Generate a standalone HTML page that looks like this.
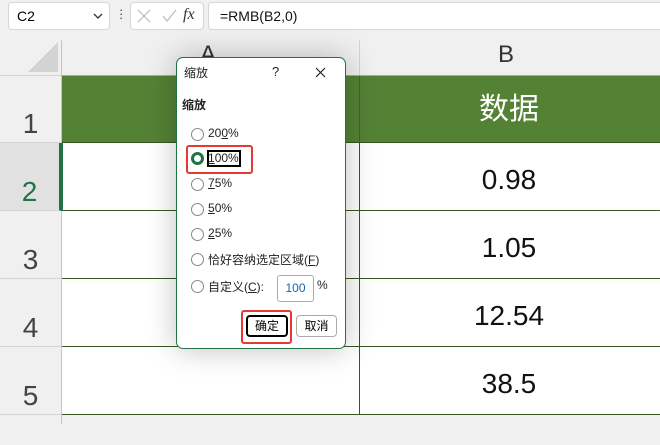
<!DOCTYPE html>
<html><head><meta charset="utf-8"><style>
body{margin:0;width:660px;height:424px;overflow:hidden;background:#f0f0f0;font-family:"Liberation Sans","Noto Sans CJK SC",sans-serif;position:relative}
.a{position:absolute}
.box{background:#fff;border:1px solid #d6d6d6;border-radius:4px}
.rh{position:absolute;left:0;width:61px;background:#f0f0f0;border-bottom:1px solid #d4d4d4;color:#444;font-size:28px;text-align:center;box-sizing:border-box}
.cell{position:absolute;background:#fff;text-align:center;font-size:28px;color:#111}
.rad{position:absolute;left:191px;width:11px;height:11px;border:1px solid #888;border-radius:50%}
.lbl{position:absolute;left:208px;font-size:12px;color:#222}
u{text-decoration:underline}
</style></head><body>
<div class="a box" style="left:8px;top:2px;width:100px;height:26px"><span class="a" style="left:8px;top:5px;font-size:14px">C2</span>
<svg class="a" style="left:84px;top:10px" width="10" height="7"><path d="M1 1l4 4 4-4" stroke="#333" fill="none" stroke-width="1.3"/></svg></div>
<div class="a" style="left:119px;top:8px;font-size:13px;color:#444;line-height:4px">·<br>·<br>·</div>
<div class="a box" style="left:130px;top:2px;width:72px;height:26px">
<svg class="a" style="left:6px;top:6px" width="40" height="14"><path d="M1 1l12 12M13 1L1 13" stroke="#bbb" stroke-width="1.2"/><path d="M26 7l4 5 9-11" stroke="#bbb" fill="none" stroke-width="1.2"/></svg>
<span class="a" style="left:52px;top:3px;font-family:'Liberation Serif',serif;font-style:italic;font-size:16px;color:#333">fx</span></div>
<div class="a box" style="left:208px;top:2px;width:460px;height:26px"><span class="a" style="left:11px;top:5px;font-size:14px;color:#111">=RMB(B2,0)</span></div>
<!-- corner -->
<svg class="a" style="left:26px;top:40px" width="34" height="34"><path d="M32 2V32H2Z" fill="#d3d3d3"/></svg>
<div class="a" style="left:0;top:75px;width:61px;height:1px;background:#d4d4d4"></div>
<div class="a" style="left:61px;top:40px;width:1px;height:384px;background:#c4c4c4"></div>
<div class="a" style="left:200px;top:41px;font-size:24px;color:#333">A</div>
<div class="a" style="left:498px;top:41px;font-size:24px;color:#333">B</div>
<div class="a" style="left:359px;top:40px;width:1px;height:35px;background:#d4d4d4"></div>
<div class="a" style="left:62px;top:75px;width:598px;height:1px;background:#a8a8a8"></div>
<div class="rh" style="top:76px;height:67px;line-height:96px">1</div>
<div class="rh" style="top:143px;height:68px;line-height:98px;background:#e1e1e1;color:#217346;border-right:2px solid #217346">2</div>
<div class="rh" style="top:211px;height:68px;line-height:98px">3</div>
<div class="rh" style="top:279px;height:68px;line-height:98px">4</div>
<div class="rh" style="top:347px;height:68px;line-height:98px">5</div>
<div class="a" style="left:62px;top:76px;width:598px;height:67px;background:#548235"></div>
<div class="a" style="left:359px;top:76px;width:1px;height:67px;background:#3f6428"></div>
<div class="a" style="left:360px;top:76px;width:298px;height:67px;color:#fff;font-size:30px;text-align:center;line-height:67px">数据</div>
<div class="a" style="left:62px;top:143px;width:598px;height:272px;background:#fff"></div>
<div class="a" style="left:62px;top:142px;width:598px;height:1px;background:#375623"></div>
<div class="a" style="left:62px;top:210px;width:598px;height:1px;background:#375623"></div>
<div class="a" style="left:62px;top:278px;width:598px;height:1px;background:#375623"></div>
<div class="a" style="left:62px;top:346px;width:598px;height:1px;background:#375623"></div>
<div class="a" style="left:62px;top:414px;width:598px;height:1px;background:#375623"></div>
<div class="a" style="left:359px;top:143px;width:1px;height:272px;background:#375623"></div>
<div class="a" style="left:61px;top:143px;width:2px;height:68px;background:#217346"></div>
<div class="a" style="left:656px;top:143px;width:2px;height:68px;background:#217346"></div>
<div class="cell" style="left:360px;top:143px;width:298px;height:67px;line-height:74px">0.98</div>
<div class="cell" style="left:360px;top:211px;width:298px;height:67px;line-height:74px">1.05</div>
<div class="cell" style="left:360px;top:279px;width:298px;height:67px;line-height:74px">12.54</div>
<div class="cell" style="left:360px;top:347px;width:298px;height:67px;line-height:74px">38.5</div>
<!-- dialog -->
<div class="a" style="left:176px;top:57px;width:168px;height:290px;background:#fff;border:1px solid #217346;border-radius:7px;box-shadow:0 0 30px rgba(0,0,0,0.25)"></div>
<div class="a" style="left:184px;top:64px;font-size:12px;color:#222">缩放</div>
<div class="a" style="left:272px;top:64px;font-size:13px;color:#222">?</div>
<svg class="a" style="left:315px;top:67px" width="11" height="11"><path d="M1 1l9 9M10 1l-9 9" stroke="#222" stroke-width="1.2"/></svg>
<div class="a" style="left:182px;top:96px;font-size:12px;color:#222;font-weight:bold">缩放</div>
<div class="rad" style="top:128px"></div><div class="lbl" style="top:126px">20<u>0</u>%</div>
<div class="a" style="left:186px;top:145px;width:67px;height:29px;border:2px solid #e53935;border-radius:3px;box-sizing:border-box"></div>
<div class="a" style="left:191px;top:152px;width:7px;height:7px;border:3px solid #217346;border-radius:50%"></div>
<div class="a" style="left:207px;top:150px;width:34px;height:17px;border:2px solid #000;box-sizing:border-box"></div>
<div class="lbl" style="top:151px"><u>1</u>00%</div>
<div class="rad" style="top:178px"></div><div class="lbl" style="top:176px"><u>7</u>5%</div>
<div class="rad" style="top:203px"></div><div class="lbl" style="top:201px"><u>5</u>0%</div>
<div class="rad" style="top:228px"></div><div class="lbl" style="top:226px"><u>2</u>5%</div>
<div class="rad" style="top:253px"></div><div class="lbl" style="top:251px">恰好容纳选定区域(<u>F</u>)</div>
<div class="rad" style="top:280px"></div><div class="lbl" style="top:278px">自定义(<u>C</u>):</div>
<div class="a" style="left:277px;top:275px;width:35px;height:25px;border:1px solid #aaa;border-radius:3px;font-size:12px;color:#1a5fb4;text-align:center;line-height:25px">100</div>
<div class="a" style="left:317px;top:278px;font-size:12px;color:#222">%</div>
<div class="a" style="left:241px;top:310px;width:51px;height:34px;border:2px solid #e53935;border-radius:3px;box-sizing:border-box"></div>
<div class="a" style="left:246px;top:315px;width:42px;height:22px;border:2px solid #000;border-radius:4px;box-sizing:border-box;font-size:12px;text-align:center;line-height:18px">确定</div>
<div class="a" style="left:296px;top:315px;width:41px;height:22px;border:1px solid #aaa;border-radius:4px;box-sizing:border-box;font-size:12px;text-align:center;line-height:20px">取消</div>
</body></html>
